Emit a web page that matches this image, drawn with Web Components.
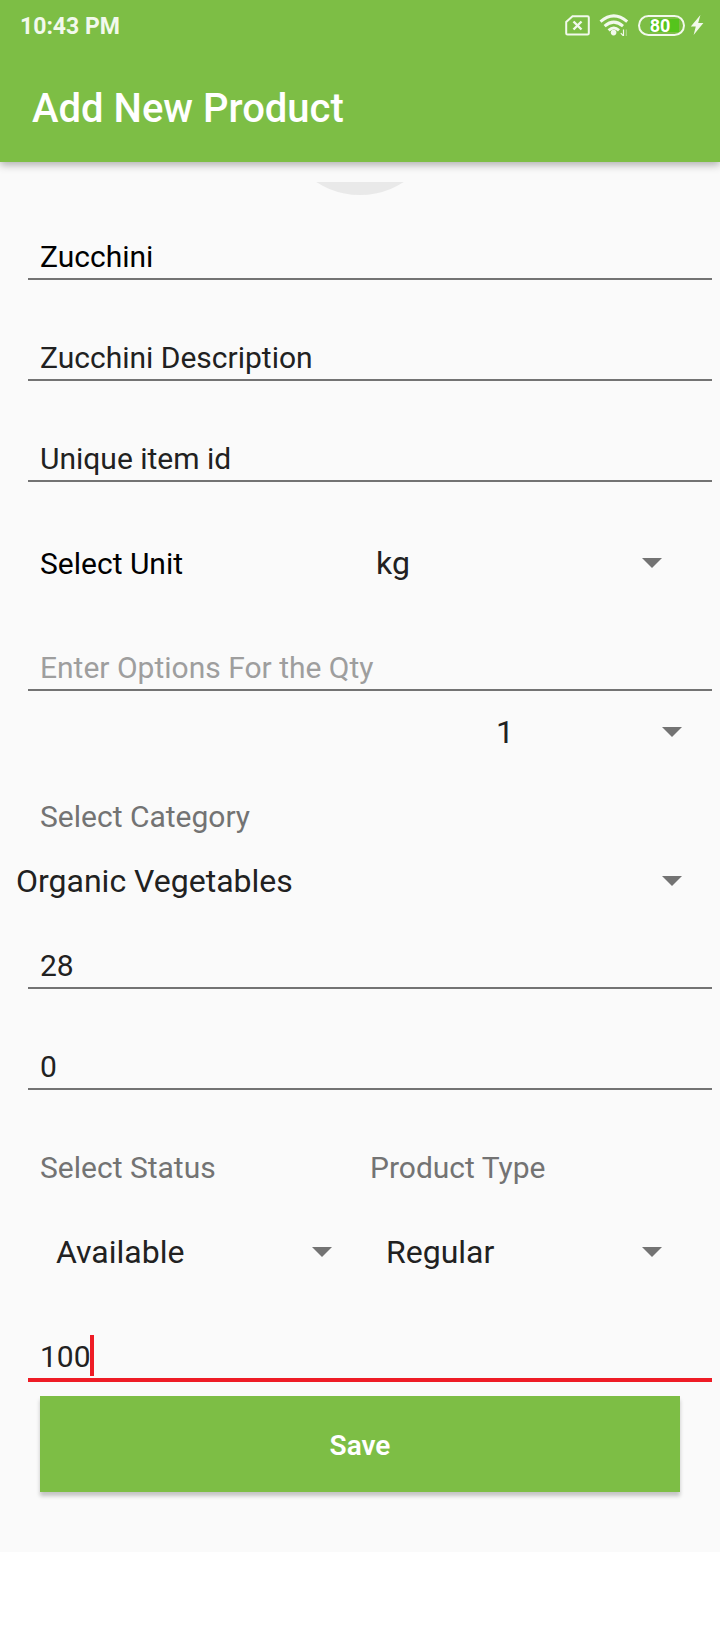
<!DOCTYPE html>
<html lang="en">
<head>
<meta charset="utf-8">
<meta name="viewport" content="width=device-width, initial-scale=1">
<title>Add New Product</title>
<style>
  :root {
    --green: #7dbe45;
    --surface: #fafafa;
    --ink: #212121;
    --muted: #737373;
    --hint: #9e9e9e;
    --accent: #ee1c25;
  }
  body {
    margin: 0;
    background: #fff;
    color: var(--ink);
    font-family: Roboto, "Liberation Sans", sans-serif;
  }
</style>
</head>
<body>
<product-page></product-page>

<script>
class BaseElement extends HTMLElement {
  connectedCallback() {
    if (this.shadowRoot) return;
    this.attachShadow({ mode: "open" }).innerHTML = this.render();
  }
  attr(name, fallback = "") {
    return this.getAttribute(name) ?? fallback;
  }
}

customElements.define("status-bar", class extends BaseElement {
  render() {
    return `
      <style>
        :host { display: flex; align-items: center; justify-content: space-between; height: 50px; padding: 0 16px 0 20px; color: #f2f9ec; }
        time { font-size: 23px; line-height: 30px; font-weight: 700; padding-top: 4px; }
        .icons { display: flex; align-items: center; }
        svg { display: block; }
        .wifi { margin-left: 9px; }
        .bolt { margin-left: 5px; }
        .battery { box-sizing: border-box; width: 47px; height: 21px; margin-left: 9px; border: 2px solid #f2f9ec; border-radius: 11px; display: grid; place-items: center;
          background: linear-gradient(#55c41c, #55c41c) 10px 2px / 29px 13px no-repeat; font-size: 18px; line-height: 18px; font-weight: 700; color: #fff; padding-right: 3px; }
      </style>
      <time>10:43 PM</time>
      <div class="icons">
        <svg width="25" height="21" viewBox="0 0 25 21" fill="none" stroke="#f2f9ec" stroke-width="2" aria-label="No SIM">
          <path d="M7.5 1.2H22.5Q23.8 1.2 23.8 2.5V18.3Q23.8 19.6 22.5 19.6H2.5Q1.2 19.6 1.2 18.3V7Z"/>
          <path d="M8.5 6.5L16.5 14.5M16.5 6.5L8.5 14.5" stroke-width="2.4"/>
        </svg>
        <svg class="wifi" width="30" height="22" viewBox="0 0 30 22" fill="none" stroke="#f2f9ec" stroke-width="3" aria-label="Wi-Fi">
          <path d="M1.5 7.6Q14.8-3.8 28.2 7.6"/>
          <path d="M5.6 12.1Q14.8 4.1 24 12.1"/>
          <path d="M9.6 16.3Q14.8 11.7 20 16.3"/>
          <circle cx="14.6" cy="18.6" r="2.8" fill="#f2f9ec" stroke="none"/>
          <path d="M24.5 15.5V22L21.8 19.2" stroke-width="1.2"/>
          <path d="M27.3 22V15.5" stroke-width="1.2" opacity=".4"/>
        </svg>
        <div class="battery">80</div>
        <svg class="bolt" width="14" height="20" viewBox="0 0 14 20" aria-label="Charging">
          <path d="M10.4 0L0.8 11.4H5.8L3.6 20L13.4 8H8.2Z" fill="#f2f9ec"/>
        </svg>
      </div>`;
  }
});

customElements.define("app-header", class extends BaseElement {
  render() {
    return `
      <style>
        :host { display: block; position: relative; background: var(--green); box-shadow: 0 3px 8px rgba(0,0,0,.3); }
        h1 { margin: 0; padding: 35px 32px 29px; color: #fff; font-size: 40px; line-height: 48px; font-weight: 500; }
      </style>
      <status-bar></status-bar>
      <h1><slot></slot></h1>`;
  }
});

customElements.define("product-avatar", class extends BaseElement {
  render() {
    return `
      <style>
        :host { display: flex; align-items: flex-end; justify-content: center; height: 13px; overflow: hidden; }
        div { flex: none; width: 160px; height: 160px; border-radius: 50%; background: #e9e9e9; }
      </style>
      <div></div>`;
  }
});

customElements.define("text-field", class extends BaseElement {
  render() {
    const active = this.hasAttribute("active");
    return `
      <style>
        :host { display: flex; align-items: flex-end; margin: 0 8px 0 28px; padding: 0 0 2px 12px; border-bottom: 2px solid var(--muted); }
        :host([active]) { border-bottom: 4px solid var(--accent); }
        input { flex: 1; min-width: 0; height: 38px; padding: 0; border: 0; outline: 0; background: none; color: inherit; font: 30px/38px Roboto, "Liberation Sans", sans-serif; }
        :host([active]) input { flex: none; field-sizing: content; }
        input::placeholder { color: var(--hint); opacity: 1; }
        .caret { width: 4px; height: 41px; margin-left: -1px; background: var(--accent); }
      </style>
      <input type="text" aria-label="${this.attr("name")}" value="${this.attr("value")}" placeholder="${this.attr("hint")}">
      ${active ? '<span class="caret"></span>' : ""}`;
  }
});

customElements.define("spinner-field", class extends BaseElement {
  render() {
    const label = this.attr("label");
    const options = this.attr("options").split(",").map(o => `<option>${o}</option>`).join("");
    return `
      <style>
        :host { display: flex; flex-direction: column; gap: var(--label-gap, 0); }
        :host([inline]) { flex-direction: row; align-items: center; }
        label { padding-left: var(--label-indent, 0); color: var(--label-color, var(--muted)); font-size: 30px; line-height: 36px; }
        :host([inline]) label { flex: 0 0 320px; padding-top: 2px; }
        .box { display: grid; align-items: center; flex: 1; }
        .box > * { grid-area: 1 / 1; }
        select { appearance: none; width: 100%; height: 48px; margin: 0; padding: 0 64px 0 16px; border: 0; border-radius: 0; outline: 0; background: none; color: inherit; font: 32px/48px Roboto, "Liberation Sans", sans-serif; }
        svg { justify-self: end; margin-right: 38px; pointer-events: none; }
      </style>
      ${label ? `<label for="s">${label}</label>` : ""}
      <div class="box">
        <select id="s" ${label ? "" : `aria-label="${this.attr("name")}"`}>${options}</select>
        <svg width="20" height="10" viewBox="0 0 20 10"><path d="M0 0H20L10 10Z" fill="#737373"/></svg>
      </div>`;
  }
});

customElements.define("save-button", class extends BaseElement {
  render() {
    return `
      <style>
        :host { display: block; margin: 0 40px; }
        button { display: block; width: 100%; height: 96px; padding: 4px 0 0; border: 0; border-radius: 0; background: var(--green); color: #fff; font: 600 28px/32px Roboto, "Liberation Sans", sans-serif; box-shadow: 0 4px 4px rgba(0,0,0,.22); }
      </style>
      <button type="button"><slot></slot></button>`;
  }
});

customElements.define("product-page", class extends BaseElement {
  render() {
    return `
      <style>
        :host { display: block; }
        main { display: flow-root; padding: 20px 0 60px; background: var(--surface); }
        .first { margin-top: 43px; color: #000; }
        .field { margin-top: 59px; }
        .unit { margin: 57px 20px 62px 40px; --label-color: #000; }
        .qty { margin: 17px 0 43px 66.6667%; }
        .category { margin-bottom: 42px; --label-gap: 22px; --label-indent: 40px; }
        .pair { display: grid; grid-template-columns: 1fr 1fr; margin: 60px 20px 0 40px; --label-gap: 42px; }
        save-button { margin-top: 14px; }
      </style>
      <app-header>Add New Product</app-header>
      <main>
        <product-avatar></product-avatar>
        <text-field class="first" name="Product name" value="Zucchini"></text-field>
        <text-field class="field" name="Description" value="Zucchini Description"></text-field>
        <text-field class="field" name="Item id" value="Unique item id"></text-field>
        <spinner-field class="unit" inline label="Select Unit" options="kg,g,piece"></spinner-field>
        <text-field name="Quantity options" hint="Enter Options For the Qty"></text-field>
        <spinner-field class="qty" name="Quantity" options="1,2,3"></spinner-field>
        <spinner-field class="category" label="Select Category" options="Organic Vegetables"></spinner-field>
        <text-field name="Price" value="28"></text-field>
        <text-field class="field" name="Discount" value="0"></text-field>
        <div class="pair">
          <spinner-field label="Select Status" options="Available,Unavailable"></spinner-field>
          <spinner-field label="Product Type" options="Regular"></spinner-field>
        </div>
        <text-field class="field" active name="Stock" value="100"></text-field>
        <save-button>Save</save-button>
      </main>`;
  }
});
</script>
</body>
</html>
